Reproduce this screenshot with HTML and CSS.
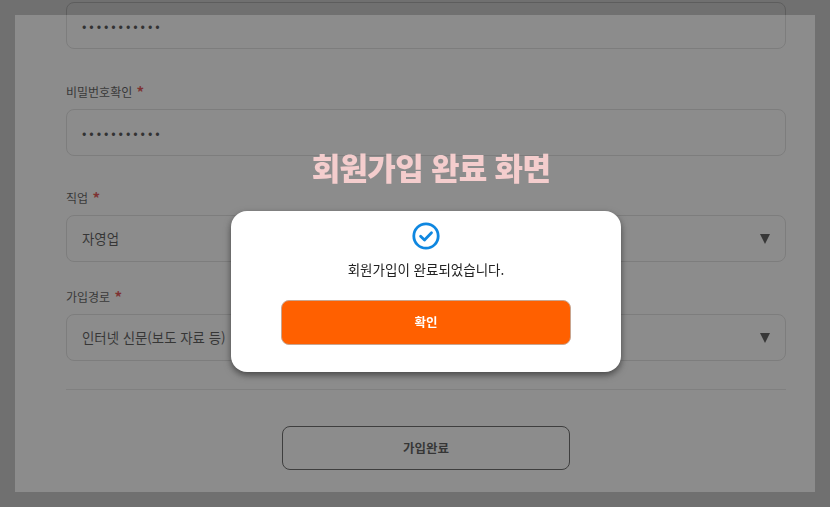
FILE: index.html
```html
<!DOCTYPE html>
<html lang="ko">

<head>
    <meta charset="UTF-8">
    <meta name="viewport" content="width=device-width, initial-scale=1.0">
    <title>회원가입 완료 화면</title>
    <link rel="stylesheet" href="styles.css">
</head>

<body>
    <div class="join-form">
        <div class="field-box first">
            <div class="field password">•••••••••••</div>
        </div>

        <div class="field-box">
            <div class="field-label">비밀번호확인 <span class="required">*</span></div>
            <div class="field password">•••••••••••</div>
        </div>

        <div class="field-box tight">
            <div class="field-label">직업 <span class="required">*</span></div>
            <div class="field">
                <span class="field-text">자영업</span>
                <span class="arrow"></span>
            </div>
        </div>

        <div class="field-box last">
            <div class="field-label">가입경로 <span class="required">*</span></div>
            <div class="field">
                <span class="field-text">인터넷 신문(보도 자료 등)</span>
                <span class="arrow"></span>
            </div>
        </div>

        <div class="form-footer">
            <button class="submit-btn" type="button">가입완료</button>
        </div>
    </div>

    <div class="dim">
        <div class="sheet">
            <h1 class="sheet-title">회원가입 완료 화면</h1>
            <div class="modal">
                <svg class="check-icon" viewBox="0 0 28 28" width="28" height="28">
                    <circle cx="14" cy="14" r="12.2" fill="none" stroke="#0f87e0" stroke-width="2.8" />
                    <path d="M8.6 14.2l3.9 3.8 7-7.2" fill="none" stroke="#0f87e0" stroke-width="2.8" stroke-linecap="round" stroke-linejoin="round" />
                </svg>
                <p class="modal-text">회원가입이 완료되었습니다.</p>
                <button class="confirm-btn" type="button">확인</button>
            </div>
        </div>
    </div>
</body>

</html>
```

FILE: styles.css
```css
* {
    box-sizing: border-box;
}

html,
body {
    height: 100%;
}

body {
    margin: 0;
    overflow: hidden;
    background-color: #fff;
    color: #0c0c0c;
    font-family: "Noto Sans CJK KR", "Noto Sans", sans-serif;
}

/* 뒤쪽 가입 폼 */
.join-form {
    width: 720px;
    margin-left: 66px;
    padding-top: 2px;
}

.field-box {
    margin-bottom: 33px;
}

.field-box.first {
    margin-bottom: 34px;
}

.field-box.tight {
    margin-bottom: 26px;
}

.field-box.last {
    margin-bottom: 0;
}

.field-label {
    height: 18px;
    margin-bottom: 8px;
    font-size: 12px;
    line-height: 18px;
}

.required {
    margin-left: 1px;
    color: #d80000;
    font-size: 15px;
    font-weight: 700;
    vertical-align: -1px;
}

.field {
    display: flex;
    justify-content: space-between;
    align-items: center;
    height: 47px;
    padding: 0 15px;
    border: 1px solid #d4d4d4;
    border-radius: 8px;
    font-size: 13.4px;
}

.field-text {
    margin-bottom: 1px;
}

.password {
    padding-bottom: 1px;
    color: #000;
    font-size: 13px;
    letter-spacing: 2.9px;
}

.arrow {
    width: 0;
    height: 0;
    border-top: 10px solid #111;
    border-left: 5.5px solid transparent;
    border-right: 5.5px solid transparent;
}

.form-footer {
    display: flex;
    justify-content: center;
    margin-top: 28px;
    padding-top: 36px;
    border-top: 1px solid #ddd;
}

.submit-btn {
    width: 288px;
    height: 44px;
    padding-bottom: 3px;
    border: 1px solid #222;
    border-radius: 8px;
    background: none;
    color: #0c0c0c;
    font-family: inherit;
    font-size: 12.5px;
    font-weight: 700;
}

/* 완료 팝업 */
.dim {
    position: fixed;
    top: 0;
    right: 0;
    bottom: 0;
    left: 0;
    padding: 15px;
    background-color: rgba(0, 0, 0, .56);
}

.sheet {
    display: flex;
    flex-direction: column;
    align-items: center;
    height: 100%;
    padding: 134px 0 0 22px;
    background-color: rgba(255, 255, 255, .196);
}

.sheet-title {
    height: 36px;
    margin: 0 0 26px 10px;
    color: #f4cdcd;
    font-size: 31px;
    font-weight: 800;
    line-height: 36px;
    letter-spacing: -.7px;
}

.modal {
    display: flex;
    flex-direction: column;
    align-items: center;
    width: 390px;
    height: 161px;
    padding-top: 11px;
    border-radius: 16px;
    background-color: #fff;
    box-shadow: 0 3px 7px rgba(0, 0, 0, .5);
}

.check-icon {
    display: block;
}

.modal-text {
    height: 20px;
    margin: 9px 0 21px;
    color: #222;
    font-size: 13.5px;
    line-height: 20px;
}

.confirm-btn {
    width: 290px;
    height: 45px;
    padding-bottom: 3px;
    border: 1px solid #c9a58f;
    border-radius: 8px;
    background-color: #ff6000;
    color: #fff;
    font-family: inherit;
    font-size: 12.5px;
    font-weight: 700;
}
```
